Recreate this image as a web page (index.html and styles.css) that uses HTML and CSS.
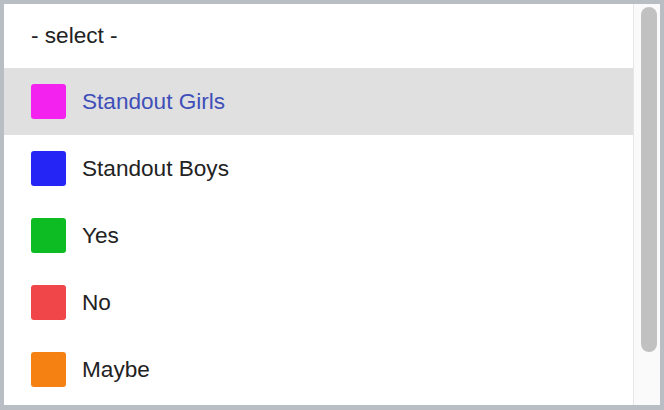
FILE: index.html
```html
<!DOCTYPE html>
<html>
<head>
<meta charset="utf-8">
<link rel="stylesheet" href="styles.css">
</head>
<body>
<div class="frame">
  <div class="list">
    <div class="row placeholder">- select -</div>
    <div class="row selected"><span class="sw sw-pink"></span><span class="label">Standout Girls</span></div>
    <div class="row"><span class="sw sw-blue"></span><span class="label">Standout Boys</span></div>
    <div class="row"><span class="sw sw-green"></span><span class="label">Yes</span></div>
    <div class="row"><span class="sw sw-red"></span><span class="label">No</span></div>
    <div class="row"><span class="sw sw-orange"></span><span class="label">Maybe</span></div>
  </div>
  <div class="scrollbar"><div class="thumb"></div></div>
</div>
</body>
</html>
```
FILE: styles.css
```css
html, body {
  margin: 0;
  padding: 0;
  background: #b8bec4;
}
.frame {
  box-sizing: border-box;
  width: 664px;
  height: 410px;
  border-style: solid;
  border-color: #b8bec4;
  border-width: 4px 4px 5px 4px;
  background: #fff;
  display: flex;
  overflow: hidden;
}
.list {
  flex: 1;
  display: flex;
  flex-direction: column;
  overflow: hidden;
  font-family: "Liberation Sans", Arial, sans-serif;
  font-size: 22.6px;
  color: #222;
}
.row {
  flex: 0 0 67px;
  height: 67px;
  display: flex;
  align-items: center;
  padding-left: 27px;
}
.row.placeholder {
  flex-basis: 64px;
  height: 64px;
  padding-left: 27px;
}
.row.selected {
  background: #e0e0e0;
  color: #3f4fb9;
}
.sw {
  width: 35px;
  height: 35px;
  border-radius: 3px;
  margin-right: 16px;
  flex: none;
}
.sw-pink { background: #f322ee; }
.sw-blue { background: #2525f6; }
.sw-green { background: #0dbb23; }
.sw-red { background: #f04649; }
.sw-orange { background: #f58112; }
.scrollbar {
  box-sizing: border-box;
  flex: 0 0 27px;
  border-left: 1px solid #e6e6e6;
  background: #fafafa;
  padding: 3px 3px 0 7px;
}
.thumb {
  width: 16px;
  height: 345px;
  border-radius: 8px;
  background: #c1c1c1;
}
```
